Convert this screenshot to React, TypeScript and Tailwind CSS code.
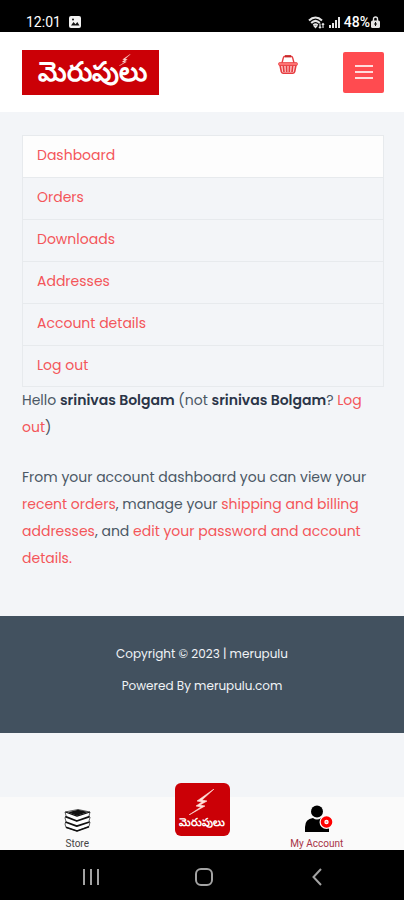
import type { ReactNode } from "react";

const accountLinks = ["Dashboard", "Orders", "Downloads", "Addresses", "Account details", "Log out"];

function TextLink({ children }: { children: ReactNode }) {
  return (
    <a href="#" className="text-[#f4565a]">
      {children}
    </a>
  );
}

function StatusBar() {
  return (
    <div className="flex h-8 items-end justify-between bg-black pl-[26px] pr-6 font-['Roboto',sans-serif] text-white">
      <div className="flex items-center gap-2">
        <span className="text-sm leading-5">12:01</span>
        <svg viewBox="0 0 12 12" className="h-3 w-3" aria-hidden="true">
          <rect width="12" height="12" rx="2" fill="#f2f2f2" />
          <path d="M2 9.5 4.5 6l2 2.2L8.3 6 10.5 9.5Z" fill="#111" />
          <circle cx="4" cy="3.5" r="1" fill="#111" />
        </svg>
      </div>
      <div className="flex items-center gap-1">
        <svg viewBox="0 0 17 13" className="h-[13px] w-[17px]" fill="none" stroke="#e5e5e5" aria-hidden="true">
          <path d="M1 4.5C5 .6 10 .6 14 4.5M3.2 7C6 4.2 9 4.2 11.8 7M5.4 9.3c1.3-1.3 2.9-1.3 4.2 0" strokeWidth="2" />
          <path d="m6.2 10.2 1.3 1.5 1.3-1.5ZM12 7.5v4.5M10.8 10.8 12 12l1.2-1.2M15 12V7.5M13.8 8.7 15 7.5l1.2 1.2" strokeWidth="1.2" />
        </svg>
        <svg viewBox="0 0 11 11" className="h-[11px] w-[11px]" fill="#e5e5e5" aria-hidden="true">
          <path d="M0 8h2v3H0zM3 6h2v5H3zM6 3h2v8H6zM9 0h2v11H9z" />
        </svg>
        <span className="flex items-center gap-px">
          <span className="text-sm leading-5 font-medium">48%</span>
          <svg viewBox="0 0 9 12" className="h-3 w-[9px]" aria-hidden="true">
            <path d="M2.5 5V3a2 2 0 0 1 4 0v2" fill="none" stroke="#e5e5e5" strokeWidth="1.4" />
            <rect y="4.5" width="9" height="7.5" rx="1.5" fill="#e5e5e5" />
            <path d="M4.5 6v4M3 8h3" stroke="#111" />
          </svg>
        </span>
      </div>
    </div>
  );
}

function BasketIcon() {
  return (
    <svg viewBox="0 0 20 19" className="h-[19px] w-5" fill="none" stroke="#e63c40" aria-hidden="true">
      <path d="M4 8 5.3 2.8Q5.7 1.2 7.3 1.2h5.4q1.6 0 2 1.6L16 8" strokeWidth="1.4" />
      <path d="M7 1.3h6" stroke="#c62828" strokeWidth="2.2" />
      <path d="m2 10 1.3 6.7q.3 1.5 1.7 1.5h10q1.4 0 1.7-1.5L18 10Z" fill="#ffd0d0" strokeWidth="1.6" />
      <path d="M5.3 10.5 6 17M8.5 10.5l.2 6.5M11.5 10.5l-.2 6.5M14.7 10.5 14 17" strokeWidth="1.7" />
      <rect x=".6" y="7.6" width="18.8" height="2.8" rx="1" fill="#f77" strokeWidth=".8" />
    </svg>
  );
}

function BoltIcon({ className }: { className: string }) {
  return (
    <svg viewBox="0 0 26 26" className={className} aria-hidden="true">
      <path d="M25 0 8 12l5 1-6 4 5 1L0 26l16-9-5-1 7-4-5-1Z" fill="#ffe3dc" stroke="#ffe3dc" strokeWidth=".6" />
    </svg>
  );
}

function BooksIcon() {
  return (
    <svg viewBox="0 0 27 23" className="h-[23px] w-[27px]" strokeLinejoin="round" aria-hidden="true">
      <path
        d="M1 3 14 .5 26 3l-1 4 1 1.5-1 3.5 1 1-1 4.5L13 22 2 18.5 1 15l1-2.5L1 9l1-2.5Z"
        fill="#fff"
        stroke="#333"
        strokeWidth=".8"
      />
      <path d="M4 3.2 14 .8l10 2.2-11 3.8Z" fill="#111" />
      <g fill="none" stroke="#111">
        <path d="M1.5 3 13 7.2 26 3" strokeWidth="1.3" />
        <path d="M1.5 7.7 12.8 12l12.7-4.3M1.5 13l11.3 4.2L25.5 13" strokeWidth="1.8" />
        <path d="M2 18.3 13 22l12-4.2" strokeWidth="1.5" />
      </g>
    </svg>
  );
}

function AccountIcon() {
  return (
    <svg viewBox="0 0 28 27" className="h-[27px] w-7" aria-hidden="true">
      <circle cx="12" cy="6.5" r="6" />
      <path d="M0 27v-5q0-8 8-9 4 3 8 0 7 1 8 9v5Z" />
      <circle cx="21.5" cy="17" r="7" fill="#fafafa" />
      <circle cx="21.5" cy="17" r="4" fill="#fff" stroke="#f00" strokeWidth="3.6" />
      <circle cx="21.5" cy="17" r="1" fill="#f99" />
    </svg>
  );
}

function SystemBar() {
  return (
    <div className="grid h-[50px] grid-cols-3 place-items-center bg-black pt-1 pr-[30px] pl-[34px]">
      <button type="button" aria-label="Recent apps">
        <svg viewBox="0 0 18 18" className="h-[18px] w-[18px]" stroke="#a3a3a3" strokeWidth="2">
          <path d="M2 1v16M9 1v16M16 1v16" />
        </svg>
      </button>
      <button type="button" aria-label="Home">
        <svg viewBox="0 0 18 18" className="h-[18px] w-[18px]" fill="none" stroke="#a3a3a3" strokeWidth="2">
          <rect x="1" y="1" width="16" height="16" rx="5" />
        </svg>
      </button>
      <button type="button" aria-label="Back">
        <svg viewBox="0 0 10 18" className="h-[18px] w-2.5" fill="none" stroke="#a3a3a3" strokeWidth="2">
          <path d="M9 1 1.5 9 9 17" />
        </svg>
      </button>
    </div>
  );
}

export default function App() {
  return (
    <div className="flex min-h-screen flex-col bg-[#f3f5f8] font-['Poppins','Inter',sans-serif] text-[#4b5865]">
      <StatusBar />

      <header className="flex h-20 items-center justify-between bg-white pr-5 pl-[22px]">
        <a
          href="#"
          className="relative flex h-[45px] w-[137px] items-center justify-center bg-[#cb0006] pl-1 text-[27px] leading-8 font-semibold text-white"
        >
          మెరుపులు
          <BoltIcon className="absolute right-7 top-1 h-3 w-3" />
        </a>
        <div className="flex items-center gap-[45px]">
          <a href="#" aria-label="Cart" className="mb-4">
            <BasketIcon />
          </a>
          <button
            type="button"
            aria-label="Menu"
            className="flex h-[41px] w-[41px] items-center justify-center rounded-xs bg-[#ff4b50]"
          >
            <svg viewBox="0 0 18 14" className="h-3.5 w-[18px]" stroke="#ffdcdc" strokeWidth="2">
              <path d="M0 1h18M0 7h18M0 13h18" />
            </svg>
          </button>
        </div>
      </header>

      <main className="pt-[23px] pr-5 pb-11 pl-[22px] text-sm leading-[27px]">
        <nav className="border-x border-[#e7eaed]">
          {accountLinks.map((label, i) => (
            <a
              key={label}
              href="#"
              className={
                i === 0
                  ? "block h-[42px] border-t border-[#e7eaed] bg-[#fdfdfd] px-3.5 py-1.5 text-[#f4565a]"
                  : "block h-[42px] border-t border-[#e7eaed] px-3.5 py-1.5 text-[#f4565a] last:border-b"
              }
            >
              {label}
            </a>
          ))}
        </nav>
        <p>
          Hello <strong className="font-semibold text-[#2b3548]">srinivas Bolgam</strong> (not{" "}
          <strong className="font-semibold text-[#2b3548]">srinivas Bolgam</strong>? <TextLink>Log out</TextLink>)
        </p>
        <p className="mt-[23px]">
          From your account dashboard you can view your <TextLink>recent orders</TextLink>, manage your{" "}
          <TextLink>shipping and billing addresses</TextLink>, and{" "}
          <TextLink>edit your password and account details.</TextLink>
        </p>
      </main>

      <footer className="h-[117px] bg-[#42515f] pt-[22px] text-center text-xs leading-8 text-[#f0f3f6]">
        <p>Copyright © 2023 | merupulu</p>
        <p>Powered By merupulu.com</p>
      </footer>

      <nav className="mt-auto grid h-[53px] grid-cols-[1fr_55px_1fr] bg-[#fafafa] font-['Roboto',sans-serif] text-[10px] leading-3 text-[#444]">
        <a href="#" className="flex flex-col items-center justify-end gap-1.5 pr-5">
          <BooksIcon />
          Store
        </a>
        <a
          href="#"
          className="-mt-3.5 flex h-[53px] flex-col items-center justify-center rounded-md bg-[#cb0006] text-white"
        >
          <BoltIcon className="h-[26px] w-[26px]" />
          <span className="text-[11px] leading-4 font-bold">మెరుపులు</span>
        </a>
        <a href="#" className="flex flex-col items-center justify-end gap-1.5 text-[#a83246]">
          <span className="pl-1 text-black">
            <AccountIcon />
          </span>
          My Account
        </a>
      </nav>
      <SystemBar />
    </div>
  );
}
